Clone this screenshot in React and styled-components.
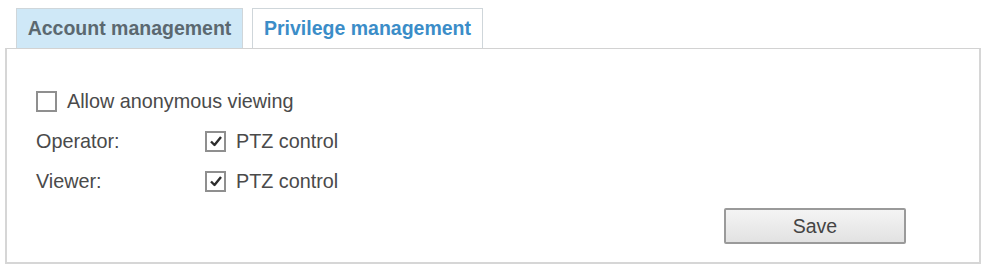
import React from 'react';
import styled, { createGlobalStyle } from 'styled-components';

const GlobalStyle = createGlobalStyle`
  body {
    margin: 0;
    background: #ffffff;
    font-family: "Liberation Sans", Arial, sans-serif;
  }
`;

const Page = styled.div`
  width: 984px;
  height: 265px;
  padding-left: 5px;
  box-sizing: border-box;
  overflow: hidden;
`;

const TabBar = styled.div`
  display: flex;
  gap: 9px;
  padding-left: 11px;
  padding-top: 8px;
`;

const Tab = styled.div`
  height: 40px;
  box-sizing: border-box;
  display: flex;
  align-items: center;
  justify-content: center;
  white-space: nowrap;
  padding: 0;
  font-size: 19.5px;
  font-weight: bold;
  border: 1px solid #cfd6da;
  border-bottom: none;
  background: ${p => (p.active ? '#ffffff' : '#cfe8f7')};
  color: ${p => (p.active ? '#3b8dc8' : '#5b6870')};
  width: ${p => p.width}px;
`;

const Panel = styled.div`
  width: 976px;
  height: 216px;
  box-sizing: border-box;
  border: 2px solid #d6d6d6;
  border-top: 1px solid #d2d2d2;
  padding: 32px 73px 0 29px;
  display: flex;
  flex-direction: column;
`;

const Row = styled.div`
  height: 40px;
  display: flex;
  align-items: center;
  font-size: 19.8px;
  color: #4a4a4a;
  white-space: nowrap;
`;

const Label = styled.div`
  width: 169px;
`;

const Box = styled.span`
  width: 21px;
  height: 21px;
  box-sizing: border-box;
  border: 2px solid #8f8f8f;
  background: #fff;
  margin-right: 10px;
  display: flex;
  align-items: center;
  justify-content: center;
`;

const ButtonRow = styled.div`
  display: flex;
  justify-content: flex-end;
  margin-top: 7px;
`;

const SaveButton = styled.button`
  width: 182px;
  height: 36px;
  border: 2px solid #9a9a9a;
  border-radius: 2px;
  background: linear-gradient(#f4f4f4, #e2e2e2);
  font-family: "Liberation Sans", Arial, sans-serif;
  font-size: 19.5px;
  color: #444;
  padding: 0;
`;

function Checkbox({ checked }) {
  return (
    <Box>
      {checked && (
        <svg width="14" height="12" viewBox="0 0 14 12">
          <path d="M2 6.5 L5.5 10 L12 2" fill="none" stroke="#2d2d2d" strokeWidth="2.4" strokeLinejoin="round" />
        </svg>
      )}
    </Box>
  );
}

export default function App() {
  return (
    <Page>
      <GlobalStyle />
      <TabBar>
        <Tab width={227}>Account management</Tab>
        <Tab active width={231}>Privilege management</Tab>
      </TabBar>
      <Panel>
        <Row>
          <Checkbox />
          Allow anonymous viewing
        </Row>
        <Row>
          <Label>Operator:</Label>
          <Checkbox checked />
          PTZ control
        </Row>
        <Row>
          <Label>Viewer:</Label>
          <Checkbox checked />
          PTZ control
        </Row>
        <ButtonRow>
          <SaveButton>Save</SaveButton>
        </ButtonRow>
      </Panel>
    </Page>
  );
}
